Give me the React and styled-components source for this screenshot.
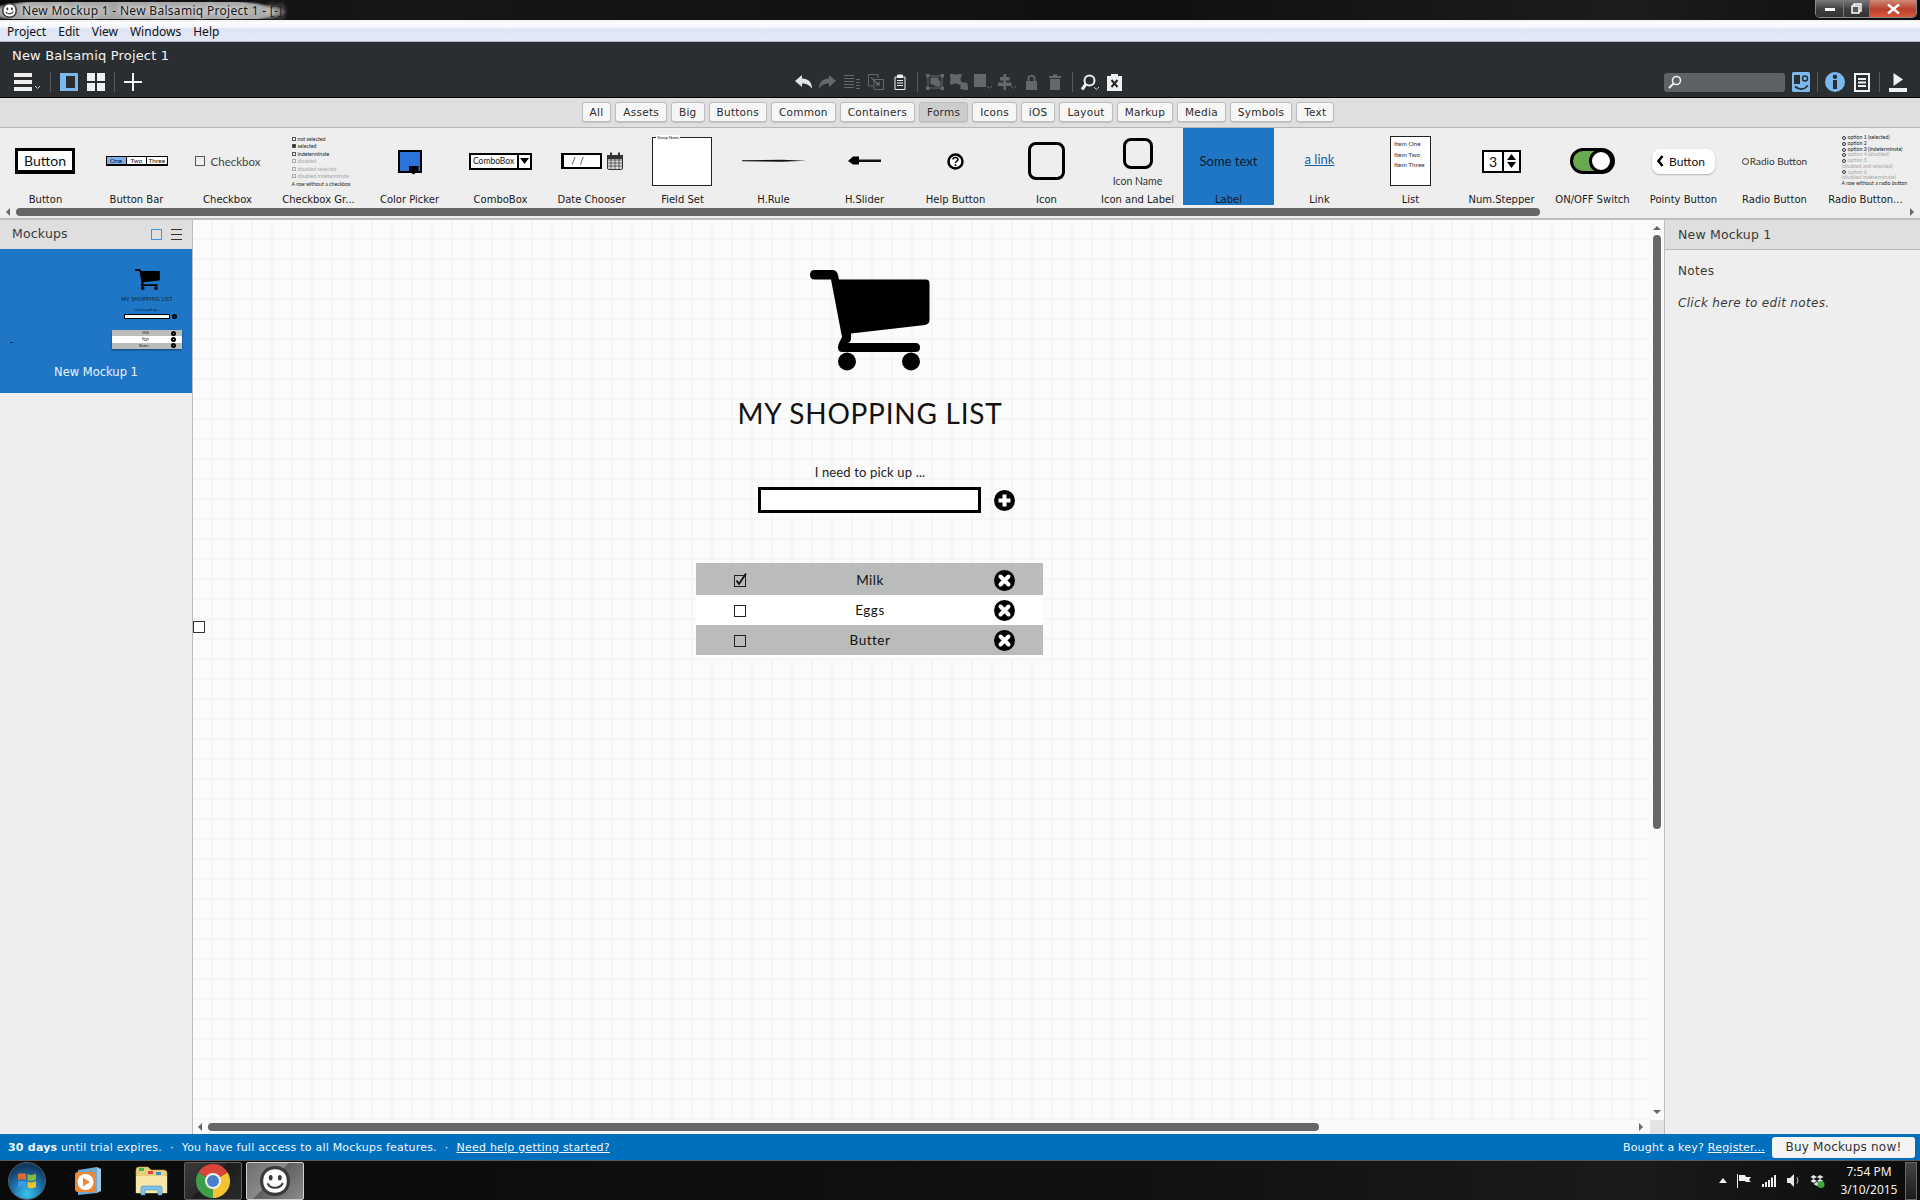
import styled, { createGlobalStyle } from "styled-components";

const GlobalStyle = createGlobalStyle`
  html, body {
    margin: 0;
    padding: 0;
    background: #eeeeee;
  }
  * {
    box-sizing: border-box;
  }
`;

const uiFont = `"DejaVu Sans", "Liberation Sans", sans-serif`;
const sketchFont = `"Lato", "Liberation Sans", sans-serif`;

const Page = styled.div`
  width: 1920px;
  height: 1200px;
  display: flex;
  flex-direction: column;
  overflow: hidden;
  font-family: ${uiFont};
  background: #eeeeee;
`;

/* ---------- window chrome ---------- */

const TitleBar = styled.div`
  height: 20px;
  flex: none;
  display: flex;
  align-items: center;
  justify-content: space-between;
  background: linear-gradient(90deg, #0b0b0b, #161616 20%, #101010 60%, #1c1c1c 85%, #0d0d0d);
`;

const TitleLeft = styled.div`
  display: flex;
  align-items: center;
  gap: 5px;
  padding-left: 2px;
  background: radial-gradient(ellipse 152px 16px at 135px 10px, #a4a4a4 90%, transparent 100%);
`;

const TitleText = styled.span`
  font-family: "Noto Sans", sans-serif;
  font-size: 12px;
  color: #1a1a1a;
  letter-spacing: 0.3px;
  text-shadow: 0 0 6px #ffffff, 0 0 6px #ffffff;
  white-space: nowrap;
  padding-right: 32px;
`;

const WindowControls = styled.div`
  display: flex;
  align-self: flex-start;
  height: 18px;
  margin-right: 3px;
  border: 1px solid #8a8a8a;
  border-top: none;
  border-radius: 0 0 5px 5px;
  overflow: hidden;
`;

const WindowButton = styled.div`
  width: ${(p) => p.$w}px;
  display: flex;
  align-items: center;
  justify-content: center;
  color: #ffffff;
  font-size: 13px;
  font-weight: 700;
  border-right: ${(p) => (p.$close ? "none" : "1px solid #777777")};
  background: ${(p) =>
    p.$close
      ? "linear-gradient(#d08a78, #b8402c 55%, #d85a3c)"
      : "linear-gradient(#7a7a7a, #3e3e3e 55%, #333333)"};
`;

const MenuBar = styled.div`
  height: 22px;
  flex: none;
  display: flex;
  align-items: center;
  border-top: 2px solid #f4f4f4;
  border-bottom: 1px solid #aeb4c4;
  background: linear-gradient(#ffffff, #f2f5fb 30%, #dfe5f4 35%, #e4e9f6);
  padding-left: 7px;
  gap: 12px;
`;

const MenuItem = styled.span`
  font-family: "Noto Sans", sans-serif;
  font-size: 12px;
  color: #111111;
`;

const AppHeader = styled.div`
  height: 56px;
  flex: none;
  background: #2a2e31;
  border-bottom: 1px solid #000000;
  display: flex;
  flex-direction: column;
`;

const ProjectName = styled.div`
  height: 26px;
  padding: 6px 0 0 12px;
  font-size: 13px;
  line-height: 16px;
  letter-spacing: 0.18px;
  color: #f4f4f4;
`;

const ToolbarRow = styled.div`
  display: grid;
  grid-template-columns: 792px 872px 1fr;
  align-items: center;
  height: 22px;
  margin-top: 3px;
`;

const ToolGroup = styled.div`
  display: flex;
  align-items: center;
  gap: ${(p) => p.$gap || 0}px;
  padding-left: ${(p) => p.$pad || 0}px;
`;

const ToolSlot = styled.div`
  width: ${(p) => p.$w || 24}px;
  height: 20px;
  display: flex;
  align-items: center;
  justify-content: center;
  flex: none;
`;

const ToolDivider = styled.div`
  width: 1px;
  height: 20px;
  background: #565a5d;
  flex: none;
  margin: 0 ${(p) => p.$m || 0}px;
`;

const SearchBox = styled.div`
  width: 121px;
  height: 19px;
  border-radius: 3px;
  background: #5c6266;
  display: flex;
  align-items: center;
  padding-left: 4px;
`;

/* ---------- filter row and library ---------- */

const FilterBar = styled.div`
  height: 30px;
  flex: none;
  background: #dfdfdf;
  border-bottom: 1px solid #b6b6b6;
  display: flex;
  justify-content: center;
  align-items: flex-start;
  padding: 4px 4px 0 0;
  gap: 4px;
`;

const FilterButton = styled.div`
  height: 20px;
  padding: 0 7px;
  display: flex;
  align-items: center;
  font-size: 10.5px;
  letter-spacing: 0.25px;
  color: #2c2c2c;
  border: 1px solid #bcbcbc;
  border-radius: 3px;
  background: ${(p) => (p.$active ? "#cdcdcd" : "#f6f6f6")};
  box-shadow: 0 1px 1px rgba(0, 0, 0, 0.12);
`;

const Library = styled.div`
  height: 92px;
  flex: none;
  background: #eeeeee;
  border-bottom: 2px solid #bdbdbd;
  display: flex;
  flex-direction: column;
`;

const LibraryItems = styled.div`
  display: flex;
  height: 77px;
`;

const LibraryItem = styled.div`
  width: 91px;
  flex: none;
  display: flex;
  flex-direction: column;
  align-items: center;
  background: ${(p) => (p.$selected ? "#1f76c6" : "transparent")};
`;

const Preview = styled.div`
  height: 66px;
  width: 100%;
  display: flex;
  align-items: center;
  justify-content: center;
  color: #111111;
  font-family: ${sketchFont};
`;

const ItemLabel = styled.div`
  height: 11px;
  line-height: 12px;
  font-size: 10px;
  color: #1a1a1a;
  white-space: nowrap;
`;

const LibraryScroll = styled.div`
  height: 8px;
  margin-top: 3px;
  display: flex;
  align-items: center;
  padding: 0 6px;
`;

const Arrow = styled.div`
  width: 0;
  height: 0;
  flex: none;
  border-style: solid;
  border-color: transparent;
  border-width: ${(p) => p.$size || 4}px;
  ${(p) => (p.$dir === "left" ? `border-left-width: 0; border-right-color: #666666;` : "")}
  ${(p) => (p.$dir === "right" ? `border-right-width: 0; border-left-color: #666666;` : "")}
  ${(p) => (p.$dir === "up" ? `border-top-width: 0; border-bottom-color: #666666;` : "")}
  ${(p) => (p.$dir === "down" ? `border-bottom-width: 0; border-top-color: #666666;` : "")}
`;

const LibraryThumb = styled.div`
  width: 1524px;
  height: 8px;
  margin-left: 6px;
  border-radius: 4px;
  background: #666666;
`;

const SpacerArrow = styled.div`
  margin-left: auto;
`;

const SketchButton = styled.div`
  width: 60px;
  height: 26px;
  display: flex;
  align-items: center;
  justify-content: center;
  background: #ffffff;
  border: 3px solid #000000;
  border-bottom-width: 4px;
  margin-left: -1px;
  font-size: 14px;
`;

const BarWrap = styled.div`
  display: flex;
  width: 62px;
  height: 10px;
  border: 1px solid #000000;
  border-bottom-width: 2px;
`;

const BarSegment = styled.div`
  flex: 1;
  font-size: 6.5px;
  line-height: 8px;
  text-align: center;
  background: ${(p) => (p.$on ? "#7fb0ea" : "#ffffff")};
  border-right: ${(p) => (p.$last ? "none" : "1px solid #000000")};
`;

const GreyCheck = styled.div`
  display: flex;
  align-items: center;
  gap: 6px;
  font-size: 11.5px;
  color: #444444;
`;

const OpenSquare = styled.span`
  width: ${(p) => p.$s || 10}px;
  height: ${(p) => p.$s || 10}px;
  flex: none;
  display: inline-block;
  border: 1px solid ${(p) => p.$c || "#555555"};
  background: ${(p) => p.$bg || "transparent"};
`;

const TinyList = styled.div`
  display: flex;
  flex-direction: column;
  gap: ${(p) => p.$gap ?? 2}px;
  font-size: 5.2px;
  line-height: ${(p) => p.$line || 6}px;
  width: 64px;
  transform: translateX(${(p) => p.$dx || 0}px);
`;

const TinyRow = styled.div`
  display: flex;
  align-items: center;
  gap: 2px;
  white-space: nowrap;
  color: ${(p) => (p.$off ? "#a8a8a8" : "#222222")};
`;

const ColorSwatch = styled.div`
  position: relative;
  width: 24px;
  height: 23px;
  background: #2a74dc;
  border: 2px solid #000000;
`;

const ColorNotch = styled.div`
  position: absolute;
  right: 1px;
  bottom: -4px;
  width: 10px;
  height: 9px;
  background: #000000;
  clip-path: polygon(0 0, 100% 0, 100% 60%, 50% 100%, 0 60%);
`;

const ComboWrap = styled.div`
  width: 63px;
  height: 17px;
  display: flex;
  background: #ffffff;
  border: 2px solid #000000;
  font-size: 8.5px;
`;

const ComboText = styled.div`
  flex: 1;
  min-width: 0;
  line-height: 12px;
  padding-left: 2px;
  border-right: 2px solid #000000;
`;

const ComboArrow = styled.div`
  width: 11px;
  flex: none;
  display: flex;
  align-items: center;
  justify-content: center;
`;

const DateWrap = styled.div`
  display: flex;
  align-items: center;
  gap: 5px;
`;

const DateField = styled.div`
  width: 41px;
  height: 16px;
  background: #ffffff;
  border: 2px solid #000000;
  border-left-width: 3px;
  font-size: 9px;
  line-height: 12px;
  padding-left: 8px;
  word-spacing: 2px;
`;

const FieldSet = styled.div`
  position: relative;
  width: 60px;
  height: 49px;
  margin-left: -1px;
  background: #ffffff;
  border: 1px solid #222222;
`;

const FieldLegend = styled.span`
  position: absolute;
  left: 3px;
  top: -3px;
  padding: 0 1px;
  font-size: 4px;
  line-height: 5px;
  background: #ffffff;
  white-space: nowrap;
`;

const BigIconSquare = styled.div`
  width: ${(p) => p.$s}px;
  height: ${(p) => p.$s + 1}px;
  border: 3px solid #000000;
  border-radius: 8px;
  background: transparent;
`;

const IconLabelWrap = styled.div`
  display: flex;
  flex-direction: column;
  align-items: center;
  gap: 6px;
  font-size: 10.5px;
  color: #333333;
  margin-top: 3px;
`;

const SomeText = styled.span`
  font-size: 13px;
  color: #0e1c2a;
`;

const LinkText = styled.span`
  font-size: 13px;
  color: #1563a8;
  text-decoration: underline;
  margin-top: -5px;
`;

const ListBox = styled.div`
  width: 41px;
  height: 50px;
  background: #ffffff;
  border: 1px solid #222222;
  padding: 2px 3px;
  font-size: 6.5px;
  line-height: 10.5px;
  color: #333333;
`;

const Stepper = styled.div`
  width: 39px;
  height: 23px;
  display: flex;
  background: #ffffff;
  border: 2px solid #000000;
  font-size: 14px;
`;

const StepperValue = styled.div`
  flex: 1;
  text-align: center;
  line-height: 19px;
  border-right: 2px solid #000000;
`;

const StepperArrows = styled.div`
  width: 15px;
  display: flex;
  flex-direction: column;
  align-items: center;
  justify-content: center;
  gap: 2px;
`;

const SmallTriangle = styled.div`
  width: 9px;
  height: 6px;
  background: #000000;
  clip-path: ${(p) =>
    p.$up ? "polygon(50% 0, 100% 100%, 0 100%)" : "polygon(0 0, 100% 0, 50% 100%)"};
`;

const Toggle = styled.div`
  position: relative;
  width: 45px;
  height: 26px;
  border-radius: 13px;
  background: #69a84f;
  border: 3px solid #000000;
`;

const ToggleKnob = styled.div`
  position: absolute;
  right: -1px;
  top: -2px;
  width: 24px;
  height: 24px;
  border-radius: 50%;
  background: #ffffff;
  border: 3px solid #000000;
`;

const PointyButton = styled.div`
  width: 63px;
  height: 25px;
  border-radius: 8px;
  background: #ffffff;
  box-shadow: 0 1px 2px rgba(0, 0, 0, 0.25);
  display: flex;
  align-items: center;
  gap: 5px;
  padding-left: 5px;
  font-size: 12px;
`;

const RadioPreview = styled.div`
  display: flex;
  align-items: center;
  gap: 1px;
  font-size: 10px;
  color: #333333;
`;

const RadioDot = styled.span`
  width: ${(p) => p.$s || 7}px;
  height: ${(p) => p.$s || 7}px;
  flex: none;
  display: inline-block;
  border: 1px solid #333333;
  border-radius: 50%;
`;

/* ---------- main three columns ---------- */

const Workspace = styled.div`
  flex: 1;
  display: flex;
  min-height: 0;
`;

const LeftPanel = styled.aside`
  width: 193px;
  flex: none;
  background: #eeeeee;
  border-right: 1px solid #bdbdbd;
  display: flex;
  flex-direction: column;
`;

const PanelHeader = styled.div`
  flex: none;
  background: #dfdfdf;
  display: flex;
  align-items: center;
  padding: 0 10px 0 ${(p) => (p.$line ? 13 : 12)}px;
  font-size: 12.5px;
  letter-spacing: 0.18px;
  color: #3a3a3a;
  border-bottom: ${(p) => (p.$line ? "1px solid #b6b6b6" : "none")};
  height: ${(p) => (p.$line ? "30px" : "29px")};
`;

const HeaderTitle = styled.span`
  margin-top: ${(p) => p.$mt || 0}px;
`;

const HeaderIcons = styled.div`
  margin-left: auto;
  display: flex;
  align-items: center;
  gap: 9px;
`;

const SelectedMockup = styled.div`
  position: relative;
  height: 144px;
  background: #1f76c6;
  padding: 20px 0 0 112px;
`;

const ThumbTick = styled.div`
  position: absolute;
  left: 10px;
  top: 93px;
  width: 3px;
  height: 1px;
  background: #123a63;
`;

const ThumbColumn = styled.div`
  width: 70px;
  display: flex;
  flex-direction: column;
  align-items: center;
`;

const ThumbTitle = styled.div`
  height: 8px;
  margin-top: 5px;
  font-family: ${sketchFont};
  font-size: 5.2px;
  line-height: 8px;
  letter-spacing: 0.3px;
  color: #0b1a28;
  white-space: nowrap;
`;

const ThumbLabel = styled.div`
  height: 5px;
  margin-top: 5px;
  font-family: ${sketchFont};
  font-size: 3.2px;
  line-height: 5px;
  color: #0b1a28;
  white-space: nowrap;
`;

const ThumbInputRow = styled.div`
  display: flex;
  align-items: center;
  gap: 2px;
  margin: 1px 0 0 6px;
`;

const ThumbInput = styled.div`
  width: 46px;
  height: 5px;
  background: #ffffff;
  border: 1px solid #000000;
`;

const ThumbDot = styled.div`
  width: 5px;
  height: 5px;
  border-radius: 50%;
  border: 2px solid #000000;
`;

const ThumbTable = styled.div`
  width: 70px;
  margin-top: 11px;
  box-shadow: 0 1px 2px rgba(0, 0, 0, 0.45);
`;

const ThumbRow = styled.div`
  height: 6.3px;
  background: ${(p) => (p.$alt ? "#ffffff" : "#babcb9")};
  display: flex;
  align-items: center;
  justify-content: flex-end;
  padding-right: 6px;
  font-family: ${sketchFont};
  font-size: 3.5px;
  color: #222222;
`;

const ThumbCell = styled.span`
  margin-right: 22px;
`;

const MockupName = styled.div`
  position: absolute;
  left: 0;
  right: 0;
  top: 115px;
  text-align: center;
  font-size: 11.5px;
  line-height: 16px;
  color: #e9f3fd;
`;

const CanvasColumn = styled.div`
  flex: 1;
  display: flex;
  flex-direction: column;
  min-width: 0;
`;

const CanvasRow = styled.div`
  flex: 1;
  display: flex;
  min-height: 0;
`;

const Canvas = styled.main`
  position: relative;
  flex: 1;
  background-color: #fbfbfb;
  background-image:
    linear-gradient(90deg, transparent 18px, #f5f5f5 18px),
    linear-gradient(transparent 18px, #f5f5f5 18px);
  background-size: 20px 20px;
  padding: 50px 0 0 503px;
`;

const SelectionHandle = styled.div`
  position: absolute;
  left: 0;
  top: 401px;
  width: 12px;
  height: 12px;
  background: #ffffff;
  border: 1px solid #333333;
`;

const MockColumn = styled.div`
  width: 348px;
  display: flex;
  flex-direction: column;
  align-items: center;
`;

const ShopTitle = styled.h1`
  margin: 27px 0 0;
  font-family: ${sketchFont};
  font-weight: 400;
  font-size: 28px;
  line-height: 30px;
  letter-spacing: 0.75px;
  color: #111111;
  white-space: nowrap;
`;

const PickLabel = styled.div`
  margin-top: 36px;
  font-family: ${sketchFont};
  font-size: 13px;
  line-height: 16px;
  letter-spacing: 0.15px;
  color: #222222;
`;

const InputRow = styled.div`
  align-self: flex-start;
  display: flex;
  align-items: center;
  gap: 13px;
  margin: 7px 0 0 62px;
`;

const SketchInput = styled.div`
  width: 223px;
  height: 26px;
  background: #ffffff;
  border: 3px solid #000000;
`;

const ShopList = styled.div`
  width: 347px;
  align-self: flex-start;
  margin-top: 50px;
  padding-bottom: 3px;
  background: #ffffff;
`;

const ShopRow = styled.div`
  height: ${(p) => p.$h}px;
  padding-top: ${(p) => p.$h - 30}px;
  display: grid;
  grid-template-columns: 84px 180px 83px;
  align-items: center;
  background: ${(p) => (p.$grey ? "#babcb9" : "#ffffff")};
`;

const ShopCheck = styled.div`
  padding-left: 38px;
  display: flex;
`;

const ShopName = styled.div`
  text-align: center;
  font-family: ${sketchFont};
  font-size: 13.5px;
  letter-spacing: 0.5px;
  color: #111111;
`;

const ShopRemove = styled.div`
  padding: 1px 0 0 34px;
  display: flex;
`;

const VScroll = styled.div`
  width: 14px;
  flex: none;
  background: #fafafa;
  display: flex;
  flex-direction: column;
  align-items: center;
  padding-top: 6px;
`;

const VThumb = styled.div`
  width: 8px;
  height: 594px;
  margin-top: 5px;
  border-radius: 4px;
  background: #666666;
`;

const VDown = styled.div`
  margin-top: auto;
  margin-bottom: 6px;
`;

const HScroll = styled.div`
  height: 14px;
  flex: none;
  display: flex;
  align-items: center;
  background: #fafafa;
  padding-left: 5px;
`;

const HThumb = styled.div`
  width: 1111px;
  height: 8px;
  margin-left: 6px;
  border-radius: 4px;
  background: #666666;
`;

const HRight = styled.div`
  margin-left: auto;
  margin-right: 7px;
`;

const ScrollCorner = styled.div`
  width: 14px;
  height: 14px;
  background: #e4e4e4;
`;

const RightPanel = styled.aside`
  width: 256px;
  flex: none;
  background: #eeeeee;
  border-left: 1px solid #bdbdbd;
`;

const NotesBody = styled.div`
  padding: 13px 13px;
  font-size: 12px;
  line-height: 16px;
  letter-spacing: 0.32px;
  color: #3a3a3a;
`;

const NotesHint = styled.div`
  margin-top: 16px;
  font-style: italic;
`;

/* ---------- bottom bars ---------- */

const StatusBar = styled.div`
  height: 26px;
  flex: none;
  display: flex;
  align-items: center;
  background: #006fbe;
  color: #f2f8fd;
  font-size: 11px;
  letter-spacing: 0.22px;
  padding: 0 5px 0 8px;
`;

const StatusDot = styled.span`
  margin: 0 8px;
`;

const StatusLink = styled.span`
  text-decoration: underline;
  white-space: nowrap;
`;

const StatusRight = styled.div`
  margin-left: auto;
  display: flex;
  align-items: center;
  gap: 7px;
`;

const BuyButton = styled.div`
  width: 143px;
  height: 21px;
  display: flex;
  align-items: center;
  justify-content: center;
  background: #f4f4f4;
  border-radius: 3px;
  color: #333333;
  font-size: 12px;
`;

const Taskbar = styled.div`
  height: 40px;
  flex: none;
  display: flex;
  align-items: center;
  padding-left: 7px;
  border-top: 1px solid #555a60;
  background: linear-gradient(90deg, #0a0a0a, #111111 60%, #1a1a1a 85%, #0c0c0c);
`;

const TaskSlot = styled.div`
  width: ${(p) => p.$w}px;
  height: 38px;
  flex: none;
  display: flex;
  align-items: center;
  justify-content: center;
  margin-left: ${(p) => p.$ml || 0}px;
`;

const TaskButton = styled(TaskSlot)`
  border: 1px solid ${(p) => (p.$on ? "#cfcfcf" : "#5f5f5f")};
  border-radius: 2px;
  background: ${(p) =>
    p.$on
      ? "linear-gradient(135deg, #6e6e6e, #8a8a8a 45%, #5e5e5e 46%, #8c8c8c)"
      : "linear-gradient(135deg, #3a3a3a, #2a2a2a 45%, #1c1c1c 46%, #2a2a2a)"};
`;

const Tray = styled.div`
  margin-left: auto;
  display: flex;
  align-items: center;
  height: 100%;
`;

const TrayIcons = styled.div`
  display: flex;
  align-items: center;
  gap: 10px;
`;

const Clock = styled.div`
  width: 72px;
  margin-left: 8px;
  text-align: center;
  font-family: "Noto Sans", sans-serif;
  font-size: 12px;
  line-height: 18px;
  color: #f2f2f2;
`;

const ShowDesktop = styled.div`
  width: 12px;
  height: 38px;
  margin: 0 3px 0 0;
  border: 1px solid #666666;
  background: linear-gradient(#444444, #1b1b1b);
`;

/* ---------- drawings ---------- */

const Ico = ({ w, h, children, fill = "none", stroke = "none", sw = 1 }) => (
  <svg width={w} height={h} viewBox={`0 0 ${w} ${h}`} fill={fill} stroke={stroke} strokeWidth={sw}>
    {children}
  </svg>
);

const Chevron = ({ x, y, c = "#cfcfcf" }) => (
  <path d={`M${x} ${y} l2.5 2.5 l2.5 -2.5`} fill="none" stroke={c} strokeWidth="1" />
);

const Smiley = ({ size, line = "#3a3a3a" }) => (
  <svg width={size} height={size} viewBox="0 0 28 28">
    <path d="M14 1.5 C22 1.5 26.5 7 26.5 14 C26.5 22 21 26.5 14 26.5 C7 26.5 1.5 22 1.5 14 C1.5 6 7 1.5 14 1.5 Z" fill="#ffffff" stroke={line} strokeWidth="3" />
    <ellipse cx="10" cy="11" rx="1.8" ry="2.6" fill={line} />
    <ellipse cx="18.5" cy="11" rx="1.8" ry="2.6" fill={line} />
    <path d="M7.5 17 C10 21.5 18 21.5 21 16.5" fill="none" stroke={line} strokeWidth="2" strokeLinecap="round" />
  </svg>
);

const CartIcon = ({ w = 120, h = 101 }) => (
  <svg width={w} height={h} viewBox="0 0 120 101" fill="#000000">
    <path d="M4.5 0 H22 Q27 0 28 5 L29 9.5 H116 Q119.5 9.5 119.5 13 V50 Q119.5 54 115 55 L41 63.5 V68 Q41 73 37 73 H105.5 Q110 73 110 77.5 Q110 82 105.5 82 H32.5 Q28 82 28 77.5 Q28 74 30.5 70 L32 67 L21 9.5 H4.5 Q0 9.5 0 4.7 Q0 0 4.5 0 Z" />
    <circle cx="37" cy="91.5" r="9" />
    <circle cx="101" cy="91.5" r="9" />
  </svg>
);

const RoundPlus = () => (
  <svg width="21" height="21" viewBox="0 0 21 21">
    <circle cx="10.5" cy="10.5" r="10.5" fill="#000000" />
    <path d="M10.5 4.5 V16.5 M4.5 10.5 H16.5" stroke="#ffffff" strokeWidth="4" />
  </svg>
);

const RoundCross = () => (
  <svg width="21" height="21" viewBox="0 0 21 21">
    <circle cx="10.5" cy="10.5" r="10.5" fill="#000000" />
    <path d="M6.5 6.5 L14.5 14.5 M14.5 6.5 L6.5 14.5" stroke="#ffffff" strokeWidth="4" strokeLinecap="round" />
  </svg>
);

const SketchCheckbox = ({ checked }) => (
  <svg width="14" height="14" viewBox="0 0 14 14" fill="none">
    <rect x="0.5" y="2.5" width="11" height="11" stroke="#222222" />
    {checked && <path d="M2.5 7.5 L5 11 L12 0.5" stroke="#111111" strokeWidth="1.8" />}
  </svg>
);

const HelpGlyph = () => (
  <svg width="17" height="17" viewBox="0 0 17 17">
    <circle cx="8.5" cy="8.5" r="7" fill="#ffffff" stroke="#000000" strokeWidth="2.5" />
    <path d="M6 6.5 C6 3.8 11 3.8 11 6.5 C11 8.3 8.5 8 8.5 10" fill="none" stroke="#000000" strokeWidth="1.5" />
    <circle cx="8.5" cy="12.2" r="1" fill="#000000" />
  </svg>
);

const App = () => {
  const filters = ["All", "Assets", "Big", "Buttons", "Common", "Containers", "Forms", "Icons", "iOS", "Layout", "Markup", "Media", "Symbols", "Text"];
  const dim = "#64686a";

  const library = [
    { name: "Button", art: <SketchButton>Button</SketchButton> },
    {
      name: "Button Bar",
      art: (
        <BarWrap>
          <BarSegment $on>One</BarSegment>
          <BarSegment>Two</BarSegment>
          <BarSegment $last>Three</BarSegment>
        </BarWrap>
      ),
    },
    {
      name: "Checkbox",
      art: (
        <GreyCheck>
          <OpenSquare />
          Checkbox
        </GreyCheck>
      ),
    },
    {
      name: "Checkbox Gr...",
      art: (
        <TinyList $gap={1.5} $dx={5}>
          <TinyRow><OpenSquare $s={4} />not selected</TinyRow>
          <TinyRow><OpenSquare $s={4} $bg="#222222" />selected</TinyRow>
          <TinyRow><OpenSquare $s={4} />indeterminate</TinyRow>
          <TinyRow $off><OpenSquare $s={4} $c="#aaaaaa" />disabled</TinyRow>
          <TinyRow $off><OpenSquare $s={4} $c="#aaaaaa" />disabled selected</TinyRow>
          <TinyRow $off><OpenSquare $s={4} $c="#aaaaaa" />disabled indeterminate</TinyRow>
          <TinyRow>A row without a checkbox</TinyRow>
        </TinyList>
      ),
    },
    {
      name: "Color Picker",
      art: (
        <ColorSwatch>
          <ColorNotch />
        </ColorSwatch>
      ),
    },
    {
      name: "ComboBox",
      art: (
        <ComboWrap>
          <ComboText>ComboBox</ComboText>
          <ComboArrow>
            <SmallTriangle />
          </ComboArrow>
        </ComboWrap>
      ),
    },
    {
      name: "Date Chooser",
      art: (
        <DateWrap>
          <DateField>/ /</DateField>
          <svg width="16" height="18" viewBox="0 0 16 18" fill="none" stroke="#333333">
            <rect x="0.5" y="3.5" width="15" height="14" rx="1.5" fill="#dddddd" />
            <path d="M0.5 8 H15.5 M0.5 11 H15.5 M0.5 14 H15.5 M4 5 V17 M8 5 V17 M12 5 V17" strokeWidth="0.7" />
            <rect x="0.5" y="3.5" width="15" height="3" fill="#333333" />
            <path d="M4 0.5 V4 M12 0.5 V4" strokeWidth="2" />
          </svg>
        </DateWrap>
      ),
    },
    {
      name: "Field Set",
      art: (
        <FieldSet>
          <FieldLegend>Group Name</FieldLegend>
        </FieldSet>
      ),
    },
    {
      name: "H.Rule",
      art: (
        <svg width="64" height="4" viewBox="0 0 64 4">
          <path d="M0 1.2 L40 0.8 L64 1.8 L40 2.8 L0 2.3 Z" fill="#111111" />
        </svg>
      ),
    },
    {
      name: "H.Slider",
      art: (
        <svg width="34" height="10" viewBox="0 0 34 10">
          <path d="M10 3.5 H33 V6 H10 Z" fill="#111111" />
          <path d="M0 5 L5 0.5 H11 V8.5 H5 Z" fill="#000000" />
        </svg>
      ),
    },
    { name: "Help Button", art: <HelpGlyph /> },
    { name: "Icon", art: <BigIconSquare $s={37} /> },
    {
      name: "Icon and Label",
      art: (
        <IconLabelWrap>
          <BigIconSquare $s={30} />
          Icon Name
        </IconLabelWrap>
      ),
    },
    { name: "Label", selected: true, art: <SomeText>Some text</SomeText> },
    { name: "Link", art: <LinkText>a link</LinkText> },
    {
      name: "List",
      art: (
        <ListBox>
          Item One
          <br />
          Item Two
          <br />
          Item Three
        </ListBox>
      ),
    },
    {
      name: "Num.Stepper",
      art: (
        <Stepper>
          <StepperValue>3</StepperValue>
          <StepperArrows>
            <SmallTriangle $up />
            <SmallTriangle />
          </StepperArrows>
        </Stepper>
      ),
    },
    {
      name: "ON/OFF Switch",
      art: (
        <Toggle>
          <ToggleKnob />
        </Toggle>
      ),
    },
    {
      name: "Pointy Button",
      art: (
        <PointyButton>
          <svg width="7" height="12" viewBox="0 0 7 12" fill="none" stroke="#000000" strokeWidth="2.5">
            <path d="M5.5 1 L1.5 6 L5.5 11" />
          </svg>
          Button
        </PointyButton>
      ),
    },
    {
      name: "Radio Button",
      art: (
        <RadioPreview>
          <RadioDot />
          Radio Button
        </RadioPreview>
      ),
    },
    {
      name: "Radio Button...",
      art: (
        <TinyList $gap={0} $line={5.7} $dx={8}>
          <TinyRow><RadioDot $s={4} />option 1 (selected)</TinyRow>
          <TinyRow><RadioDot $s={4} />option 2</TinyRow>
          <TinyRow><RadioDot $s={4} />option 3 (indeterminate)</TinyRow>
          <TinyRow $off><RadioDot $s={4} />option 4 (disabled)</TinyRow>
          <TinyRow $off><RadioDot $s={4} />option 5</TinyRow>
          <TinyRow $off>(disabled and selected)</TinyRow>
          <TinyRow $off><RadioDot $s={4} />option 6</TinyRow>
          <TinyRow $off>(disabled indeterminate)</TinyRow>
          <TinyRow>A row without a radio button</TinyRow>
        </TinyList>
      ),
    },
  ];

  const shopping = [
    { name: "Milk", h: 32, grey: true, checked: true },
    { name: "Eggs", h: 30 },
    { name: "Butter", h: 30, grey: true },
  ];

  return (
    <Page>
      <GlobalStyle />

      <TitleBar>
        <TitleLeft>
          <Smiley size={15} />
          <TitleText>New Mockup 1 - New Balsamiq Project 1 - [-]</TitleText>
        </TitleLeft>
        <WindowControls>
          <WindowButton $w={28}>
            <svg width="10" height="4"><rect width="10" height="3" y="1" fill="#ffffff" /></svg>
          </WindowButton>
          <WindowButton $w={26}>
            <svg width="11" height="11" viewBox="0 0 11 11" fill="none" stroke="#ffffff" strokeWidth="1.5">
              <rect x="3" y="1" width="7" height="7" />
              <rect x="1" y="3" width="7" height="7" fill="#5a5a5a" />
            </svg>
          </WindowButton>
          <WindowButton $w={46} $close>
            <svg width="13" height="10" viewBox="0 0 13 10" stroke="#ffffff" strokeWidth="2.5">
              <path d="M1 0.5 L12 9.5 M12 0.5 L1 9.5" />
            </svg>
          </WindowButton>
        </WindowControls>
      </TitleBar>

      <MenuBar>
        {["Project", "Edit", "View", "Windows", "Help"].map((m) => (
          <MenuItem key={m}>{m}</MenuItem>
        ))}
      </MenuBar>

      <AppHeader>
        <ProjectName>New Balsamiq Project 1</ProjectName>
        <ToolbarRow>
          <ToolGroup $pad={14} $gap={9}>
            <ToolSlot $w={27}>
              <Ico w={27} h={18}>
                <path d="M0 0 H18 V4 H0 Z M0 7 H18 V11 H0 Z M0 14 H18 V18 H0 Z" fill="#f0f0f0" />
                <Chevron x={21} y={13} />
              </Ico>
            </ToolSlot>
            <ToolDivider />
            <ToolSlot $w={18}>
              <Ico w={18} h={18}>
                <path d="M0 0 H18 V18 H0 Z M6 3 V15 H15 V3 Z" fill="#7ab8ee" fillRule="evenodd" />
              </Ico>
            </ToolSlot>
            <ToolSlot $w={18}>
              <Ico w={18} h={18} fill="#f0f0f0">
                <rect width="8" height="8" />
                <rect x="10" width="8" height="8" />
                <rect y="10" width="8" height="8" />
                <rect x="10" y="10" width="8" height="8" />
              </Ico>
            </ToolSlot>
            <ToolDivider />
            <ToolSlot $w={18}>
              <Ico w={18} h={18} stroke="#f4f4f4" sw={2}>
                <path d="M9 0 V18 M0 9 H18" />
              </Ico>
            </ToolSlot>
          </ToolGroup>

          <ToolGroup>
            <ToolSlot>
              <Ico w={18} h={14} fill="#e4e4e4"><path d="M0 6 L7 0 V3.5 C13 3.5 17 7 17 13.5 C14 9.5 11 8.5 7 8.5 V12 Z" /></Ico>
            </ToolSlot>
            <ToolSlot>
              <Ico w={18} h={14} fill={dim}><path d="M17 6 L10 0 V3.5 C4 3.5 0 7 0 13.5 C3 9.5 6 8.5 10 8.5 V12 Z" /></Ico>
            </ToolSlot>
            <ToolSlot>
              <Ico w={16} h={16} stroke={dim}><path d="M0 1.5 H10 M0 4.5 H10 M0 7.5 H10 M0 10.5 H10 M0 13.5 H10 M12 5.5 H16 M12 8.5 H16 M12 11.5 H16 M12 14.5 H16" /></Ico>
            </ToolSlot>
            <ToolSlot>
              <Ico w={16} h={16} stroke={dim}><path d="M0.5 0.5 H10 V4 M0.5 0.5 V12 H5 M6 5.5 H15.5 V15.5 H6 Z" /><path d="M3 3.5 L11 11 M8 11 H11 V8" strokeWidth="1.5" /></Ico>
            </ToolSlot>
            <ToolSlot>
              <Ico w={12} h={16} stroke="#f0f0f0">
                <path d="M1 3 H11 V15.5 H1 Z M3 6.5 H9 M3 9 H9 M3 11.5 H9" />
                <path d="M3.5 1 H8.5 V3.5 H3.5 Z" fill="#f0f0f0" />
              </Ico>
            </ToolSlot>
            <ToolDivider $m={5} />
            <ToolSlot>
              <Ico w={18} h={16} stroke={dim}>
                <path d="M2 2 H16 V14 H2 Z" />
                <path d="M0 0 H3 V3 H0 Z M15 0 H18 V3 H15 Z M0 13 H3 V16 H0 Z M15 13 H18 V16 H15 Z" fill={dim} />
                <path d="M5 4 H12 V10 H5 Z M9 7 H14 V12 H9 Z" fill={dim} />
              </Ico>
            </ToolSlot>
            <ToolSlot>
              <Ico w={18} h={16} stroke={dim}>
                <path d="M1 1 H10 V9 H1 Z M11 9 H17 V15 H11 Z" fill={dim} />
                <path d="M0 0 H3 V3 H0 Z M8 0 H11 V3 H8 Z M0 7 H3 V10 H0 Z M8 7 H11 V10 H8 Z M15 13 H18 V16 H15 Z" fill={dim} />
              </Ico>
            </ToolSlot>
            <ToolSlot>
              <Ico w={19} h={16} fill={dim}>
                <rect width="12" height="13" />
                <Chevron x={13} y={12} c={dim} />
              </Ico>
            </ToolSlot>
            <ToolSlot>
              <Ico w={19} h={16} fill={dim}>
                <path d="M5.5 0 H8 V16 H5.5 Z M2 3 H11.5 V6.5 H2 Z M0 8.5 H13.5 V12 H0 Z" />
                <Chevron x={13} y={12} c={dim} />
              </Ico>
            </ToolSlot>
            <ToolSlot>
              <Ico w={13} h={16} fill={dim}>
                <path d="M1 7 H12 V16 H1 Z" />
                <path d="M3.5 7 V4 C3.5 0.8 9.5 0.8 9.5 4 V7" fill="none" stroke={dim} strokeWidth="1.8" />
              </Ico>
            </ToolSlot>
            <ToolSlot>
              <Ico w={12} h={16} fill={dim}>
                <path d="M4 0.5 H8 V2 H12 V4 H0 V2 H4 Z M1 5 H11 V16 H1 Z" />
              </Ico>
            </ToolSlot>
            <ToolDivider $m={5} />
            <ToolSlot>
              <Ico w={19} h={17}>
                <circle cx="8.5" cy="6.5" r="5" fill="none" stroke="#f0f0f0" strokeWidth="2" />
                <path d="M5 10 L1 15.5" stroke="#f0f0f0" strokeWidth="3" />
                <Chevron x={13} y={13} />
              </Ico>
            </ToolSlot>
            <ToolSlot>
              <Ico w={15} h={17} fill="#f0f0f0">
                <path d="M4 0 H11 V2 H15 V17 H0 V2 H4 Z" />
                <path d="M4.5 6 L10.5 13 M10.5 6 L4.5 13" stroke="#24282b" strokeWidth="2" />
              </Ico>
            </ToolSlot>
          </ToolGroup>

          <ToolGroup $gap={7}>
            <SearchBox>
              <Ico w={14} h={14}>
                <circle cx="8.5" cy="5.5" r="4" fill="none" stroke="#f0f0f0" strokeWidth="1.6" />
                <path d="M5.5 8.5 L1 13" stroke="#f0f0f0" strokeWidth="2" />
              </Ico>
            </SearchBox>
            <ToolSlot $w={18}>
              <Ico w={18} h={20}>
                <rect width="18" height="20" rx="1.5" fill="#7ab8ee" />
                <path d="M2 3 H8 V12 H2 Z" fill="#2a2e31" />
                <circle cx="13" cy="6.5" r="2.5" fill="none" stroke="#2a2e31" strokeWidth="1.5" />
                <path d="M3 14.5 C7 18 12 18 16 13.5" fill="none" stroke="#2a2e31" strokeWidth="1.8" />
              </Ico>
            </ToolSlot>
            <ToolDivider />
            <ToolSlot $w={20}>
              <Ico w={20} h={20}>
                <circle cx="10" cy="10" r="10" fill="#7ab8ee" />
                <rect x="8" y="8" width="4" height="9" fill="#2a2e31" />
                <circle cx="10" cy="4.8" r="2.2" fill="#2a2e31" />
              </Ico>
            </ToolSlot>
            <ToolSlot $w={20}>
              <Ico w={16} h={19}>
                <rect x="1" y="1" width="14" height="17" fill="none" stroke="#f0f0f0" strokeWidth="2" />
                <path d="M4 6 H12 M4 9.5 H12 M4 13 H12" stroke="#f0f0f0" strokeWidth="2" />
              </Ico>
            </ToolSlot>
            <ToolDivider />
            <ToolSlot $w={22}>
              <Ico w={18} h={20} fill="#f0f0f0">
                <path d="M4.5 1 L14 7.5 L4.5 14 Z" />
                <rect y="16" width="18" height="4" />
              </Ico>
            </ToolSlot>
          </ToolGroup>
        </ToolbarRow>
      </AppHeader>

      <FilterBar>
        {filters.map((f) => (
          <FilterButton key={f} $active={f === "Forms"}>{f}</FilterButton>
        ))}
      </FilterBar>

      <Library>
        <LibraryItems>
          {library.map((item) => (
            <LibraryItem key={item.name} $selected={item.selected}>
              <Preview>{item.art}</Preview>
              <ItemLabel>{item.name}</ItemLabel>
            </LibraryItem>
          ))}
        </LibraryItems>
        <LibraryScroll>
          <Arrow $dir="left" />
          <LibraryThumb />
          <SpacerArrow>
            <Arrow $dir="right" />
          </SpacerArrow>
        </LibraryScroll>
      </Library>

      <Workspace>
        <LeftPanel>
          <PanelHeader>
            <HeaderTitle $mt={-2}>Mockups</HeaderTitle>
            <HeaderIcons>
              <Ico w={11} h={11}>
                <rect x="0.5" y="0.5" width="10" height="10" fill="none" stroke="#3a95ea" />
              </Ico>
              <Ico w={11} h={11} stroke="#333333">
                <path d="M0 0.5 H11 M0 5.5 H11 M0 10.5 H11" />
              </Ico>
            </HeaderIcons>
          </PanelHeader>
          <SelectedMockup>
            <ThumbTick />
            <ThumbColumn>
              <CartIcon w={25} h={21} />
              <ThumbTitle>MY SHOPPING LIST</ThumbTitle>
              <ThumbLabel>I need to pick up ...</ThumbLabel>
              <ThumbInputRow>
                <ThumbInput />
                <ThumbDot />
              </ThumbInputRow>
              <ThumbTable>
                <ThumbRow><ThumbCell>Milk</ThumbCell><ThumbDot /></ThumbRow>
                <ThumbRow $alt><ThumbCell>Eggs</ThumbCell><ThumbDot /></ThumbRow>
                <ThumbRow><ThumbCell>Butter</ThumbCell><ThumbDot /></ThumbRow>
              </ThumbTable>
            </ThumbColumn>
            <MockupName>New Mockup 1</MockupName>
          </SelectedMockup>
        </LeftPanel>

        <CanvasColumn>
          <CanvasRow>
            <Canvas>
              <SelectionHandle />
              <MockColumn>
                <CartIcon />
                <ShopTitle>MY SHOPPING LIST</ShopTitle>
                <PickLabel>I need to pick up ...</PickLabel>
                <InputRow>
                  <SketchInput />
                  <RoundPlus />
                </InputRow>
                <ShopList>
                  {shopping.map((row) => (
                    <ShopRow key={row.name} $h={row.h} $grey={row.grey}>
                      <ShopCheck>
                        <SketchCheckbox checked={row.checked} />
                      </ShopCheck>
                      <ShopName>{row.name}</ShopName>
                      <ShopRemove>
                        <RoundCross />
                      </ShopRemove>
                    </ShopRow>
                  ))}
                </ShopList>
              </MockColumn>
            </Canvas>
            <VScroll>
              <Arrow $dir="up" />
              <VThumb />
              <VDown>
                <Arrow $dir="down" />
              </VDown>
            </VScroll>
          </CanvasRow>
          <HScroll>
            <Arrow $dir="left" />
            <HThumb />
            <HRight>
              <Arrow $dir="right" />
            </HRight>
            <ScrollCorner />
          </HScroll>
        </CanvasColumn>

        <RightPanel>
          <PanelHeader $line>New Mockup 1</PanelHeader>
          <NotesBody>
            Notes
            <NotesHint>Click here to edit notes.</NotesHint>
          </NotesBody>
        </RightPanel>
      </Workspace>

      <StatusBar>
        <strong>30 days</strong>&nbsp;until trial expires.
        <StatusDot>·</StatusDot>
        You have full access to all Mockups features.
        <StatusDot>·</StatusDot>
        <StatusLink>Need help getting started?</StatusLink>
        <StatusRight>
          <span>
            Bought a key? <StatusLink>Register...</StatusLink>
          </span>
          <BuyButton>Buy Mockups now!</BuyButton>
        </StatusRight>
      </StatusBar>

      <Taskbar>
        <TaskSlot $w={40}>
          <svg width="38" height="38" viewBox="0 0 38 38">
            <defs>
              <radialGradient id="orb" cx="50%" cy="85%" r="75%">
                <stop offset="0%" stopColor="#37c6ee" />
                <stop offset="55%" stopColor="#1f6fa8" />
                <stop offset="100%" stopColor="#123a5e" />
              </radialGradient>
            </defs>
            <circle cx="19" cy="19" r="18.5" fill="url(#orb)" stroke="#4a5a68" />
            <path d="M10 12 Q14 10.5 18 12 V18 Q14 16.5 10 18 Z" fill="#e8652c" />
            <path d="M19.5 12 Q24 14 28 11.5 V17.5 Q24 20 19.5 18 Z" fill="#86b83c" />
            <path d="M10 19.5 Q14 18 18 19.5 V25.5 Q14 24 10 25.5 Z" fill="#3a9be0" />
            <path d="M19.5 19.5 Q24 21.5 28 19 V25 Q24 27.5 19.5 25.5 Z" fill="#f0c030" />
          </svg>
        </TaskSlot>
        <TaskSlot $w={32} $ml={25}>
          <svg width="26" height="28" viewBox="0 0 26 28">
            <path d="M3 3 L22 0 V26 L3 28 Z" fill="#6ea8d0" />
            <path d="M22 0 L26 2 V24 L22 26 Z" fill="#9cc8e4" />
            <rect x="0" y="5" width="21" height="20" rx="3" fill="#e9893c" />
            <circle cx="10.5" cy="15" r="8" fill="#ffffff" />
            <path d="M8 10.5 L15 15 L8 19.5 Z" fill="#e9893c" />
          </svg>
        </TaskSlot>
        <TaskSlot $w={36} $ml={29}>
          <svg width="33" height="30" viewBox="0 0 33 30">
            <path d="M1 4 Q1 1 4 1 H13 L16 4 H29 Q32 4 32 7 V27 H1 Z" fill="#e8cf7e" stroke="#b89a4a" strokeWidth="0.6" />
            <rect x="4" y="2" width="5" height="3" fill="#3fb44a" />
            <rect x="13" y="5" width="5" height="3" fill="#d8453a" />
            <rect x="21" y="6" width="5" height="3" fill="#2f8fe0" />
            <path d="M1 10 H32 V27 H1 Z" fill="#f6e6a8" />
            <path d="M6 29 V22 Q6 20 8 20 H25 Q27 20 27 22 V29 H23 V24 H10 V29 Z" fill="#7cc2e8" stroke="#4a90bc" strokeWidth="0.6" />
          </svg>
        </TaskSlot>
        <TaskButton $w={58} $ml={15}>
          <svg width="34" height="34" viewBox="-17 -17 34 34">
            <path d="M0 0 L-14.72 -8.5 A17 17 0 0 1 14.72 -8.5 Z" fill="#d9453a" />
            <path d="M0 0 L14.72 -8.5 A17 17 0 0 1 0 17 Z" fill="#f4c430" />
            <path d="M0 0 L0 17 A17 17 0 0 1 -14.72 -8.5 Z" fill="#3f9e48" />
            <circle r="8" fill="#f2f2f2" />
            <circle r="6" fill="#4a80c8" />
          </svg>
        </TaskButton>
        <TaskButton $w={58} $ml={4} $on>
          <Smiley size={30} />
        </TaskButton>

        <Tray>
          <TrayIcons>
            <Ico w={8} h={5} fill="#f0f0f0"><path d="M4 0 L8 5 H0 Z" /></Ico>
            <Ico w={15} h={14} fill="#f0f0f0">
              <rect width="1" height="14" />
              <path d="M2 1 H8 L9 3 H14 L12 6 L14 8 H9 L8 7 H2 Z" />
            </Ico>
            <Ico w={15} h={12} fill="#f0f0f0">
              <rect y="9" width="2" height="3" />
              <rect x="3" y="7" width="2" height="5" />
              <rect x="6" y="5" width="2" height="7" />
              <rect x="9" y="2.5" width="2" height="9.5" />
              <rect x="12" width="2" height="12" />
            </Ico>
            <Ico w={13} h={13} fill="#e8e8e8">
              <path d="M0 4 H3 L7 0 V13 L3 9 H0 Z" />
              <path d="M10 3.5 Q12 6.5 10 9.5" fill="none" stroke="#cccccc" />
            </Ico>
            <Ico w={15} h={14}>
              <path d="M3.5 1 L7 3 L3.5 5 L0.5 3 Z M10 1 L13.5 3 L10 5 L7 3 Z M3.5 5 L7 7 L3.5 9 L0.5 7 Z M10 5 L13.5 7 L10 9 L7 7 Z M3.5 10 L7 8 L10 10 L7 12 Z" fill="#e4e4e4" />
              <circle cx="11" cy="10.5" r="3.5" fill="#3aa83a" />
            </Ico>
          </TrayIcons>
          <Clock>
            7:54 PM
            <br />
            3/10/2015
          </Clock>
          <ShowDesktop />
        </Tray>
      </Taskbar>
    </Page>
  );
};

export default App;
